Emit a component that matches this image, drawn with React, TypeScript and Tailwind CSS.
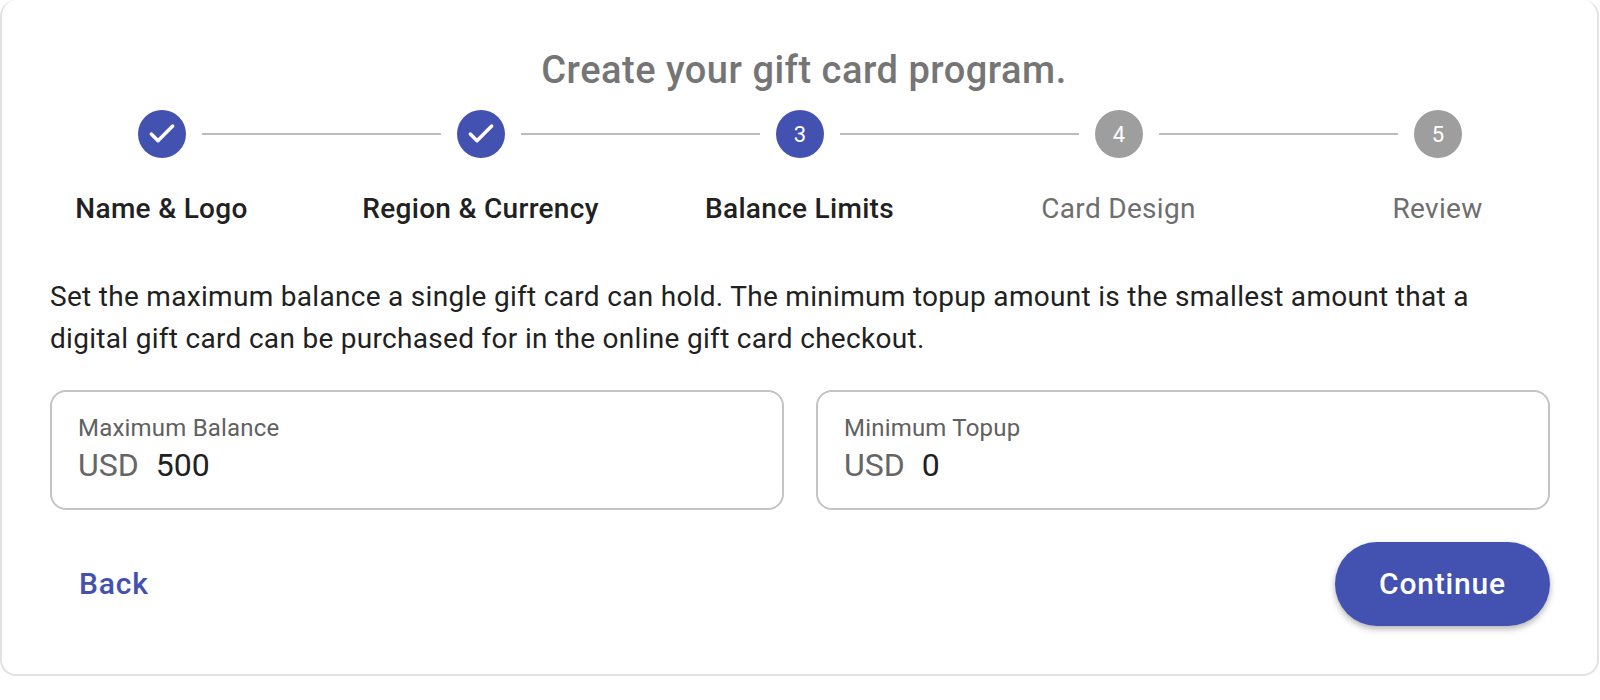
import { Check } from "lucide-react";

const steps = [
  { label: "Name & Logo", state: "done" },
  { label: "Region & Currency", state: "done" },
  { label: "Balance Limits", state: "active" },
  { label: "Card Design", state: "todo" },
  { label: "Review", state: "todo" },
];

function StepIcon({ index, state }: { index: number; state: string }) {
  return (
    <div
      className={`w-12 h-12 shrink-0 rounded-full flex items-center justify-center text-white text-[22px] ${
        state === "todo" ? "bg-[#9e9e9e]" : "bg-[#4351b0]"
      }`}
    >
      {state === "done" ? <Check size={32} strokeWidth={2.6} /> : index + 1}
    </div>
  );
}

function AmountField({ label, value }: { label: string; value: string }) {
  return (
    <div className="h-[120px] border-2 border-[#c4c4c4] rounded-2xl px-[26px] pt-[21px]">
      <div className="text-[24px] leading-[30px] text-[#616161] tracking-[0.2px]">{label}</div>
      <div className="flex items-center text-[32px] leading-[44px]">
        <span className="text-[#666666] mr-[17px]">USD</span>
        <span className="text-[#212121]">{value}</span>
      </div>
    </div>
  );
}

export default function App() {
  return (
    <div className="w-[1600px] h-[700px] bg-white overflow-hidden font-['Roboto',sans-serif]">
      <div className="w-[1599px] h-[676px] border-2 border-t-0 border-[#e2e2e2] rounded-2xl">
        <h1 className="pt-[44px] pl-[9px] text-center text-[38px] leading-[52px] font-medium text-[#757575] tracking-[0.5px]">
          Create your gift card program.
        </h1>

        <div className="flex items-center mt-[14px] pl-[136px] pr-[135px]">
          {steps.map((step, i) => (
            <div key={step.label} className={i < 4 ? "flex items-center flex-1" : "flex items-center"}>
              <StepIcon index={i} state={step.state} />
              {i < 4 && <div className="flex-1 h-[2px] mx-4 bg-[#bdbdbd]" />}
            </div>
          ))}
        </div>

        <div className="grid grid-cols-5 mt-[31px]">
          {steps.map((step) => (
            <div
              key={step.label}
              className={`text-center text-[28px] leading-[40px] ${
                step.state === "todo" ? "text-[#6e6e6e] tracking-[0.3px]" : "text-[#212121] font-medium tracking-[0.3px]"
              }`}
            >
              {step.label}
            </div>
          ))}
        </div>

        <div className="pl-[48px] pr-[47px]">
          <p className="mt-[47px] max-w-[1430px] text-[28px] leading-[42px] text-[#212121] tracking-[0.3px]">
            Set the maximum balance a single gift card can hold. The minimum topup amount is the smallest amount that a
            digital gift card can be purchased for in the online gift card checkout.
          </p>

          <div className="grid grid-cols-2 gap-8 mt-[30px]">
            <AmountField label="Maximum Balance" value="500" />
            <AmountField label="Minimum Topup" value="0" />
          </div>

          <div className="flex items-center justify-between mt-[32px]">
            <button className="px-[29px] pb-[2px] h-[84px] text-[30px] font-medium text-[#4351b0] tracking-[0.8px]">Back</button>
            <button className="w-[215px] h-[84px] pb-[2px] rounded-full bg-[#4351b0] text-white text-[30px] font-medium tracking-[0.8px] shadow-[0_3px_6px_rgba(0,0,0,0.3)]">
              Continue
            </button>
          </div>
        </div>
      </div>
    </div>
  );
}
